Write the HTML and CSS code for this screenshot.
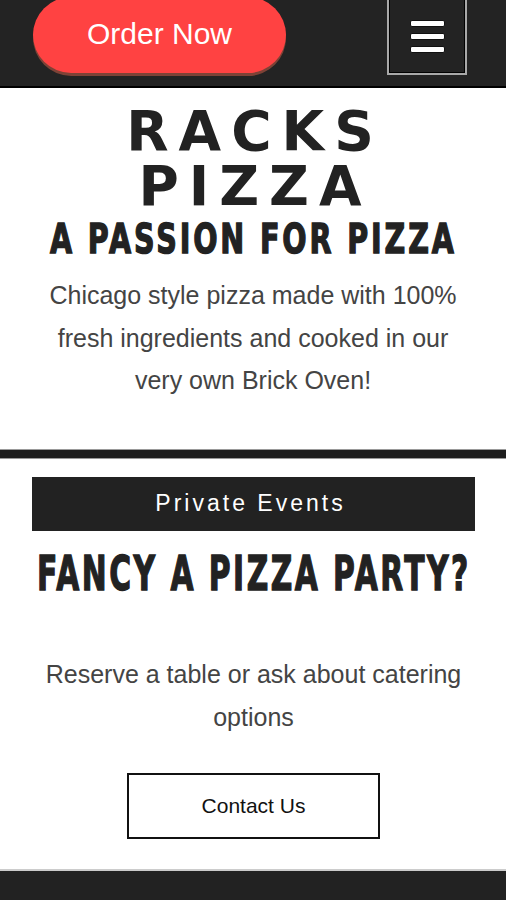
FILE: index.html
```html
<!DOCTYPE html>
<html lang="en">
<head>
<meta charset="utf-8">
<title>Racks Pizza</title>
<link rel="stylesheet" href="styles.css">
</head>
<body>
<header class="topbar">
  <a class="order-btn" href="#">Order Now</a>
  <button class="menu-btn" aria-label="Menu">
    <span class="bar"></span>
    <span class="bar"></span>
    <span class="bar"></span>
  </button>
</header>
<section class="hero">
  <h1 class="brand"><span class="brand-line">RACKS</span><span class="brand-line">PIZZA</span></h1>
  <h2 class="tagline"><span class="squeeze tagline-text">A PASSION FOR PIZZA</span></h2>
  <p class="copy">Chicago style pizza made with 100% fresh ingredients and cooked in our very own Brick Oven!</p>
</section>
<div class="divider"></div>
<section class="events">
  <div class="events-label">Private Events</div>
  <h2 class="events-title"><span class="squeeze events-title-text">FANCY A PIZZA PARTY?</span></h2>
  <p class="copy events-copy">Reserve a table or ask about catering options</p>
  <a class="contact-btn" href="#">Contact Us</a>
</section>
<footer class="footer"></footer>
</body>
</html>
```
FILE: styles.css
```css
* { box-sizing: border-box; }
html, body { margin: 0; padding: 0; }
body {
  background: #fff;
  font-family: "Liberation Sans", Arial, sans-serif;
  color: #222;
  overflow: hidden;
}
.topbar {
  height: 88px;
  background: #232323;
  border-bottom: 2px solid #000;
  display: flex;
  justify-content: space-between;
  align-items: flex-start;
  padding: 0 39px 0 33px;
  overflow: hidden;
}
.order-btn {
  margin-top: -3px;
  width: 253px;
  height: 76px;
  border-radius: 38px;
  background: #ff4242;
  box-shadow: 0 3px 0 #7d4236;
  color: #fff;
  text-decoration: none;
  font-size: 30px;
  display: flex;
  align-items: center;
  justify-content: center;
  padding: 0 0 2px 0;
}
.menu-btn {
  margin-top: -5px;
  width: 80px;
  height: 80px;
  background: #232323;
  border: 2px solid #a8a8a8;
  box-shadow: inset 0 0 0 1px #000;
  display: flex;
  flex-direction: column;
  align-items: center;
  gap: 6px;
  padding: 23px 0 0;
}
.bar {
  display: block;
  width: 35px;
  height: 7px;
  background: #fff;
  border: 1px solid #111;
  border-radius: 2px;
}
.hero {
  text-align: center;
  padding: 16px 37px 0;
  height: 361px;
}
.brand {
  margin: 0;
  font-family: "DejaVu Sans", sans-serif;
  font-weight: 700;
  font-size: 55px;
  line-height: 55px;
  letter-spacing: 10px;
  text-indent: 4px;
  color: #222;
}
.brand-line { display: block; }
.tagline, .events-title {
  margin: 0;
  display: flex;
  justify-content: center;
  white-space: nowrap;
  font-family: "DejaVu Sans", sans-serif;
  font-weight: 700;
  color: #222;
}
.squeeze {
  display: inline-block;
  -webkit-text-stroke: 1.4px #222;
}
.tagline {
  margin-top: 3px;
  font-size: 40px;
  line-height: 44px;
}
.tagline-text {
  letter-spacing: 4px;
  transform: scaleX(0.715);
}
.copy {
  margin: 13px 0 0;
  font-size: 25px;
  line-height: 42.5px;
  color: #444;
}
.divider {
  height: 10px;
  background: #1e1e1e;
  border-top: 1px solid #999;
  border-bottom: 1px solid #999;
}
.events {
  text-align: center;
  padding: 18px 31px 30px 32px;
  display: flex;
  flex-direction: column;
  align-items: center;
}
.events-label {
  align-self: stretch;
  height: 54px;
  background: #222;
  color: #fff;
  font-size: 23px;
  letter-spacing: 3px;
  padding: 0 6px 2px 0;
  display: flex;
  align-items: center;
  justify-content: center;
}
.events-title {
  align-self: stretch;
  font-size: 48px;
  line-height: 56px;
  margin-top: 14px;
}
.events-title-text {
  letter-spacing: 4px;
  transform: scaleX(0.62);
}
.events-copy {
  margin-top: 52px;
  padding: 0 5px;
}
.contact-btn {
  margin-top: 35px;
  width: 253px;
  height: 66px;
  border: 2px solid #111;
  color: #111;
  text-decoration: none;
  font-size: 21px;
  display: flex;
  align-items: center;
  justify-content: center;
}
.footer {
  height: 40px;
  background: #222;
  border-top: 2px solid #ccc;
}
```
